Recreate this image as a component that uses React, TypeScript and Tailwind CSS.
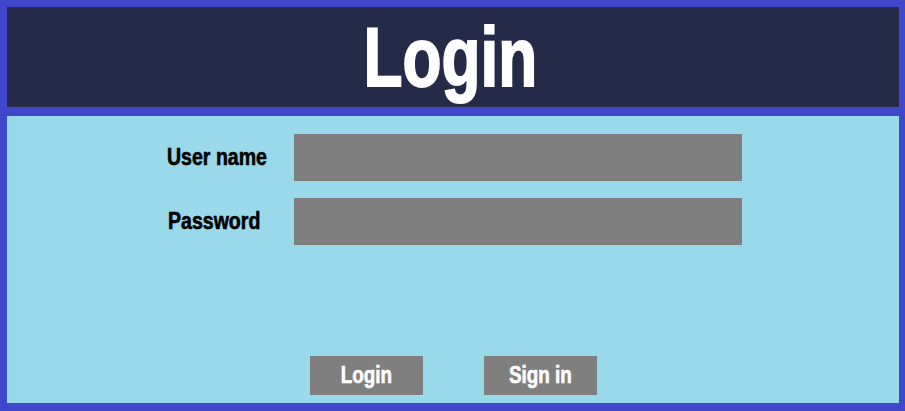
import React from "react";

const heavy = "font-['Liberation_Sans_Narrow','Liberation_Sans',sans-serif] font-bold";

export default function App() {
  return (
    <div className="w-[905px] h-[411px] bg-[#3f48cc] pt-[7px] pl-[7px] pr-[6px] pb-[8px] flex flex-col gap-[9px]">
      <header className="h-[100px] shrink-0 bg-[#262a49] flex items-center justify-center">
        <h1 className={`${heavy} text-white text-[84px] leading-none scale-x-[0.76] -translate-x-[3px] [-webkit-text-stroke:2px_white]`}>
          Login
        </h1>
      </header>

      <main className="flex-1 bg-[#99d9ea] flex flex-col pt-[18px] pb-[8px]">
        <div className="flex flex-col gap-[17px] pl-[160px]">
          <div className="flex items-center">
            <label className="w-[127px] shrink-0 pt-[2px]">
              <span className={`${heavy} inline-block origin-left scale-x-[0.85] text-black text-[23px] leading-none [-webkit-text-stroke:0.6px_black]`}>
                User name
              </span>
            </label>
            <input className="w-[448px] h-[47px] bg-[#7f7f7f] outline-none" />
          </div>
          <div className="flex items-center">
            <label className="w-[127px] shrink-0 pl-[1px] pt-[2px]">
              <span className={`${heavy} inline-block origin-left scale-x-[0.85] text-black text-[23px] leading-none [-webkit-text-stroke:0.6px_black]`}>
                Password
              </span>
            </label>
            <input type="password" className="w-[448px] h-[47px] bg-[#7f7f7f] outline-none" />
          </div>
        </div>

        <div className="mt-auto flex justify-center gap-[61px]">
          <button className="w-[113px] h-[39px] bg-[#7f7f7f] flex items-center justify-center">
            <span className={`${heavy} inline-block scale-x-[0.82] text-white text-[23px] leading-none [-webkit-text-stroke:0.6px_white]`}>
              Login
            </span>
          </button>
          <button className="w-[113px] h-[39px] bg-[#7f7f7f] flex items-center justify-center">
            <span className={`${heavy} inline-block scale-x-[0.82] text-white text-[23px] leading-none [-webkit-text-stroke:0.6px_white]`}>
              Sign in
            </span>
          </button>
        </div>
      </main>
    </div>
  );
}
